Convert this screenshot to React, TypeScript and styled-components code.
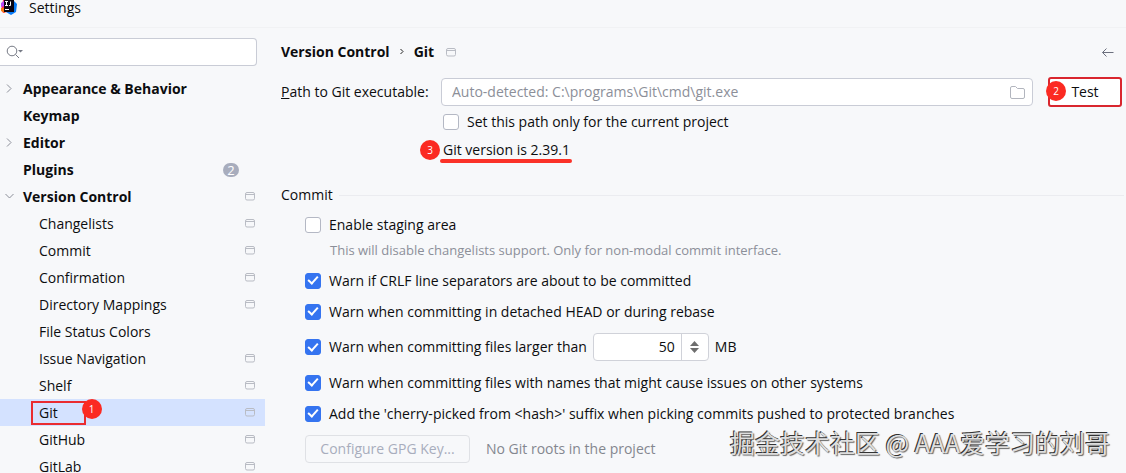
import React, { useState } from "react";
import styled, { createGlobalStyle, css } from "styled-components";

const GlobalStyle = createGlobalStyle`
  *, *::before, *::after { box-sizing: border-box; }
  body {
    margin: 0;
    background: #f7f8fa;
    color: #0c0d0f;
    font-family: "Open Sans", "Noto Sans CJK SC", sans-serif;
    font-size: 14px;
    line-height: 20px;
  }
  button, input { font: inherit; color: inherit; }
`;

const Window = styled.div`
  position: relative;
  display: flex;
  flex-direction: column;
  height: 100vh;
  overflow: hidden;
`;

const TitleBar = styled.header`
  display: flex;
  align-items: flex-start;
  gap: 12px;
  flex: none;
  height: 28px;
  border-bottom: 1px solid #f1f2f4;
  line-height: 16px;
`;

const Body = styled.div`
  display: flex;
  flex: 1;
  min-height: 0;
`;

const Sidebar = styled.aside`
  flex: none;
  width: 265px;
  overflow: hidden;
`;

const SearchBox = styled.label`
  display: flex;
  align-items: center;
  height: 28px;
  margin: 10px 8px 9px 0;
  padding-left: 6px;
  border: 1px solid #c9ccd6;
  border-left: 0;
  border-radius: 0 4px 4px 0;
  background: #fff;
`;

const BareInput = styled.input`
  flex: 1;
  min-width: 0;
  border: 0;
  outline: 0;
  padding: 0;
  background: transparent;
  &::placeholder { color: #8c8f99; opacity: 1; }
`;

const Tree = styled.ul`
  list-style: none;
  margin: 0;
  padding: 0;
`;

const TreeRow = styled.li<{ $child?: boolean; $selected?: boolean }>`
  display: flex;
  align-items: center;
  height: 27px;
  padding: 0 10px 0 ${(p) => (p.$child ? 39 : 4)}px;
  font-weight: ${(p) => (p.$child ? 400 : 700)};
  background: ${(p) => (p.$selected ? "#d4e2ff" : "transparent")};
`;

const Chevron = styled.span`
  display: flex;
  flex: none;
  width: 19px;
`;

const TreeLink = styled.a`
  color: inherit;
  text-decoration: none;
`;

const RowEnd = styled.span`
  display: flex;
  margin-left: auto;
`;

const CountBadge = styled.span`
  width: 16px;
  height: 14px;
  margin-right: 16px;
  border-radius: 7px;
  background: #a8adbd;
  color: #fff;
  font-size: 13px;
  font-weight: 400;
  line-height: 14px;
  text-align: center;
`;

const Marked = styled.span`
  position: relative;
`;

const MarkFrame = styled.span`
  position: absolute;
  inset: -2px -28px -2px -8px;
  border: 2px solid #ea2c30;
`;

const StepDot = styled.span`
  position: absolute;
  width: 20px;
  height: 20px;
  border-radius: 50%;
  background: #fb2a22;
  color: #fff;
  font-size: 10px;
  font-weight: 400;
  line-height: 20px;
  text-align: center;
`;

const TreeDot = styled(StepDot)`
  right: -44px;
  top: -4px;
`;

const ButtonDot = styled(StepDot)`
  left: -4px;
  top: 2px;
`;

const VersionDot = styled(StepDot)`
  left: -23px;
  top: 0;
`;

const Main = styled.main`
  flex: 1;
  min-width: 0;
  padding: 0 4px 0 16px;
`;

const Crumbs = styled.nav`
  display: flex;
  align-items: center;
  height: 48px;
  font-weight: 700;
`;

const CrumbSeparator = styled.span`
  display: flex;
  width: 24px;
  justify-content: center;
`;

const CrumbScope = styled.span`
  display: flex;
  margin-left: 12px;
`;

const BackButton = styled.button`
  display: flex;
  margin-left: auto;
  margin-right: 8px;
  padding: 0;
  border: 0;
  background: none;
`;

const PathRow = styled.div`
  display: flex;
  align-items: center;
  height: 32px;
`;

const PathLabel = styled.label`
  flex: none;
  width: 160px;
`;

const PathField = styled.div`
  display: flex;
  flex: 1;
  align-items: center;
  height: 28px;
  padding: 0 7px 0 10px;
  border: 1px solid #c9ccd6;
  border-radius: 4px;
  background: #fff;
`;

const TestButton = styled.button`
  position: relative;
  width: 74px;
  height: 30px;
  margin-left: 15px;
  padding: 0;
  border: 2px solid #d9262e;
  border-radius: 3px;
  background: #fff;
`;

const PathDetails = styled.div`
  padding-left: 162px;
`;

const CheckLabel = styled.label<{ $height?: number }>`
  display: flex;
  align-items: center;
  height: ${(p) => p.$height ?? 31}px;
`;

const checkMark = css`
  &::after {
    content: "";
    width: 6px;
    height: 10px;
    margin-top: -3px;
    border: solid #fff;
    border-width: 0 2px 2px 0;
    transform: rotate(42deg);
  }
`;

const CheckBox = styled.input.attrs({ type: "checkbox" })`
  appearance: none;
  display: flex;
  align-items: center;
  justify-content: center;
  flex: none;
  width: 16px;
  height: 16px;
  margin: 0 8px 0 0;
  border: 1px solid #b4b8c4;
  border-radius: 3px;
  background: #fff;
  &:checked {
    border-color: #3574f0;
    background: #3574f0;
    ${checkMark}
  }
`;

const VersionLine = styled.div`
  display: flex;
  height: 28px;
  padding-top: 4px;
`;

const VersionText = styled.span`
  position: relative;
  &::after {
    content: "";
    position: absolute;
    left: -3px;
    right: -2px;
    bottom: -4px;
    height: 4px;
    border-radius: 2px;
    background: #fb3228;
  }
`;

const VersionGroup = styled.span`
  position: relative;
`;

const SectionHeader = styled.h2`
  display: flex;
  align-items: center;
  gap: 6px;
  margin: 21px -2px 8px 0;
  font-size: inherit;
  font-weight: 400;
  &::after {
    content: "";
    flex: 1;
    height: 1px;
    background: #ebecf0;
  }
`;

const Options = styled.section`
  padding-left: 24px;
`;

const Hint = styled.p`
  height: 28px;
  margin: 0 0 0 25px;
  padding-top: 3px;
  color: #8c8f99;
  font-size: 13px;
`;

const SizeRow = styled.div`
  display: flex;
  align-items: center;
  height: 40px;
`;

const Spinner = styled.div`
  display: flex;
  width: 116px;
  height: 28px;
  margin: 0 6px;
  border: 1px solid #d0d2d9;
  border-radius: 4px;
  background: #fff;
`;

const SpinnerInput = styled(BareInput)`
  padding-right: 6px;
  text-align: right;
`;

const SpinnerSteps = styled.div`
  display: flex;
  flex-direction: column;
  align-items: center;
  justify-content: center;
  gap: 2px;
  width: 27px;
  border-left: 1px solid #d0d2d9;
`;

const StepButton = styled.button`
  display: flex;
  padding: 0;
  border: 0;
  background: none;
`;

const GpgRow = styled.div`
  display: flex;
  align-items: center;
  gap: 16px;
  margin-top: 6px;
  color: #84878f;
`;

const GpgButton = styled.button`
  width: 165px;
  height: 28px;
  padding: 0;
  border: 1px solid #dfe1e5;
  border-radius: 4px;
  background: transparent;
  color: #a8adbd;
`;

const Watermark = styled.div`
  position: absolute;
  right: 16px;
  bottom: 13px;
  color: #dedede;
  font-family: "Noto Sans CJK SC", sans-serif;
  font-size: 25px;
  line-height: 36px;
  white-space: nowrap;
  text-shadow: -1px -1px 0 #333, 1px 1px 1px #666;
`;

const AppLogo = () => (
  <svg width="17" height="16" viewBox="0 0 17 16" aria-hidden="true">
    <path d="M9 0h4l4 4-1 8-5 3-5-3z" fill="#087cfa" />
    <path d="M3 0h6L7 12 3 13 1 9l1-3z" fill="#fe315d" />
    <path d="M1 3 4 1v5L1 7z" fill="#b74af7" />
    <path d="M1 8h4v5l-4-2z" fill="#f97a12" />
    <path d="M4 0h10v12H4z" fill="#0b0714" />
    <path d="M5 1.500h3M6.500 1.500v4M5 5.500h3M10.500 1.500v4H9M5 9.500h4" stroke="#fff" fill="none" />
  </svg>
);

const ScopeIcon = () => (
  <svg width="10" height="9" viewBox="0 0 10 9" fill="none" stroke="#b9bcc4" aria-hidden="true">
    <rect x=".5" y=".5" width="9" height="7.500" rx="1.500" />
    <path d="M.5 2.500h9" />
  </svg>
);

const ChevronIcon = ({ open }: { open?: boolean }) => (
  <svg width="10" height="10" viewBox="0 0 10 10" fill="none" stroke="#8c8f99" aria-hidden="true">
    <path d={open ? "M1.500 2 5.500 6l4-4" : "M3 .5 7 4.500 3 8.500"} />
  </svg>
);

type Item = { label: string; child?: boolean; open?: boolean; closed?: boolean; scope?: boolean; count?: number };

const items: Item[] = [
  { label: "Appearance & Behavior", closed: true },
  { label: "Keymap" },
  { label: "Editor", closed: true },
  { label: "Plugins", count: 2 },
  { label: "Version Control", open: true, scope: true },
  { label: "Changelists", child: true, scope: true },
  { label: "Commit", child: true, scope: true },
  { label: "Confirmation", child: true, scope: true },
  { label: "Directory Mappings", child: true, scope: true },
  { label: "File Status Colors", child: true },
  { label: "Issue Navigation", child: true, scope: true },
  { label: "Shelf", child: true, scope: true },
  { label: "Git", child: true, scope: true },
  { label: "GitHub", child: true, scope: true },
  { label: "GitLab", child: true, scope: true },
];

const Option = ({ children, checked = true, height }: { children: React.ReactNode; checked?: boolean; height?: number }) => (
  <CheckLabel $height={height}>
    <CheckBox defaultChecked={checked} />
    {children}
  </CheckLabel>
);

export default function App() {
  const [limit, setLimit] = useState(50);
  return (
    <Window>
      <GlobalStyle />
      <TitleBar>
        <AppLogo />
        Settings
      </TitleBar>
      <Body>
        <Sidebar>
          <SearchBox>
            <svg width="18" height="14" viewBox="0 0 18 14" fill="none" stroke="#767a85" aria-hidden="true">
              <circle cx="6" cy="6" r="4.800" />
              <path d="m9.500 9.500 3.500 3.500" />
              <path d="M12 5h5l-2.500 2.500z" fill="#767a85" stroke="none" />
            </svg>
            <BareInput type="text" aria-label="Search settings" />
          </SearchBox>
          <Tree>
            {items.map((item) => {
              const selected = item.label === "Git";
              return (
                <TreeRow key={item.label} $child={item.child} $selected={selected}>
                  {!item.child && <Chevron>{(item.open || item.closed) && <ChevronIcon open={item.open} />}</Chevron>}
                  <Marked>
                    <TreeLink href="#">{item.label}</TreeLink>
                    {selected && (
                      <>
                        <MarkFrame />
                        <TreeDot>1</TreeDot>
                      </>
                    )}
                  </Marked>
                  <RowEnd>
                    {item.count && <CountBadge>{item.count}</CountBadge>}
                    {item.scope && <ScopeIcon />}
                  </RowEnd>
                </TreeRow>
              );
            })}
          </Tree>
        </Sidebar>
        <Main>
          <Crumbs aria-label="Breadcrumb">
            <span>Version Control</span>
            <CrumbSeparator>
              <svg width="6" height="8" viewBox="0 0 6 8" fill="none" stroke="#222" aria-hidden="true">
                <path d="m1.500 1 2.500 2.500L1.500 6" />
              </svg>
            </CrumbSeparator>
            <span>Git</span>
            <CrumbScope>
              <ScopeIcon />
            </CrumbScope>
            <BackButton aria-label="Back">
              <svg width="13" height="12" viewBox="0 0 13 12" fill="none" stroke="#6c707e" aria-hidden="true">
                <path d="M12.500 6.500H1.500M5.500 2.500l-4 4 4 4" />
              </svg>
            </BackButton>
          </Crumbs>
          <PathRow>
            <PathLabel htmlFor="git-path">
              <u>P</u>ath to Git executable:
            </PathLabel>
            <PathField>
              <BareInput id="git-path" type="text" placeholder="Auto-detected: C:\programs\Git\cmd\git.exe" />
              <svg width="15" height="13" viewBox="0 0 15 13" fill="none" stroke="#b2b5be" aria-hidden="true">
                <path d="M.5 2A1.500 1.500 0 0 1 2 .5h3.500L7.500 2.500H13A1.500 1.500 0 0 1 14.500 4v7A1.500 1.500 0 0 1 13 12.500H2A1.500 1.500 0 0 1 .5 11z" />
              </svg>
            </PathField>
            <TestButton>
              Test
              <ButtonDot>2</ButtonDot>
            </TestButton>
          </PathRow>
          <PathDetails>
            <Option checked={false} height={28}>Set this path only for the current project</Option>
            <VersionLine>
              <VersionGroup>
                <VersionText>Git version is 2.39.1</VersionText>
                <VersionDot>3</VersionDot>
              </VersionGroup>
            </VersionLine>
          </PathDetails>
          <SectionHeader>Commit</SectionHeader>
          <Options>
            <Option checked={false} height={24}>Enable staging area</Option>
            <Hint>This will disable changelists support. Only for non-modal commit interface.</Hint>
            <Option>Warn if CRLF line separators are about to be committed</Option>
            <Option>Warn when committing in detached HEAD or during rebase</Option>
            <SizeRow>
              <Option>Warn when committing files larger than</Option>
              <Spinner>
                <SpinnerInput
                  type="text"
                  aria-label="File size limit in MB"
                  value={limit}
                  onChange={(e) => setLimit(Number(e.target.value) || 0)}
                />
                <SpinnerSteps>
                  <StepButton aria-label="Increase" onClick={() => setLimit(limit + 1)}>
                    <svg width="9" height="5" viewBox="0 0 9 5" aria-hidden="true">
                      <path d="M0 5 4.500 0 9 5z" fill="#6e6e6e" />
                    </svg>
                  </StepButton>
                  <StepButton aria-label="Decrease" onClick={() => setLimit(limit - 1)}>
                    <svg width="9" height="5" viewBox="0 0 9 5" aria-hidden="true">
                      <path d="M0 0 4.500 5 9 0z" fill="#6e6e6e" />
                    </svg>
                  </StepButton>
                </SpinnerSteps>
              </Spinner>
              MB
            </SizeRow>
            <Option>Warn when committing files with names that might cause issues on other systems</Option>
            <Option>Add the 'cherry-picked from &lt;hash&gt;' suffix when picking commits pushed to protected branches</Option>
            <GpgRow>
              <GpgButton disabled>Configure GPG Key...</GpgButton>
              No Git roots in the project
            </GpgRow>
          </Options>
        </Main>
      </Body>
      <Watermark>掘金技术社区 @ AAA爱学习的刘哥</Watermark>
    </Window>
  );
}
